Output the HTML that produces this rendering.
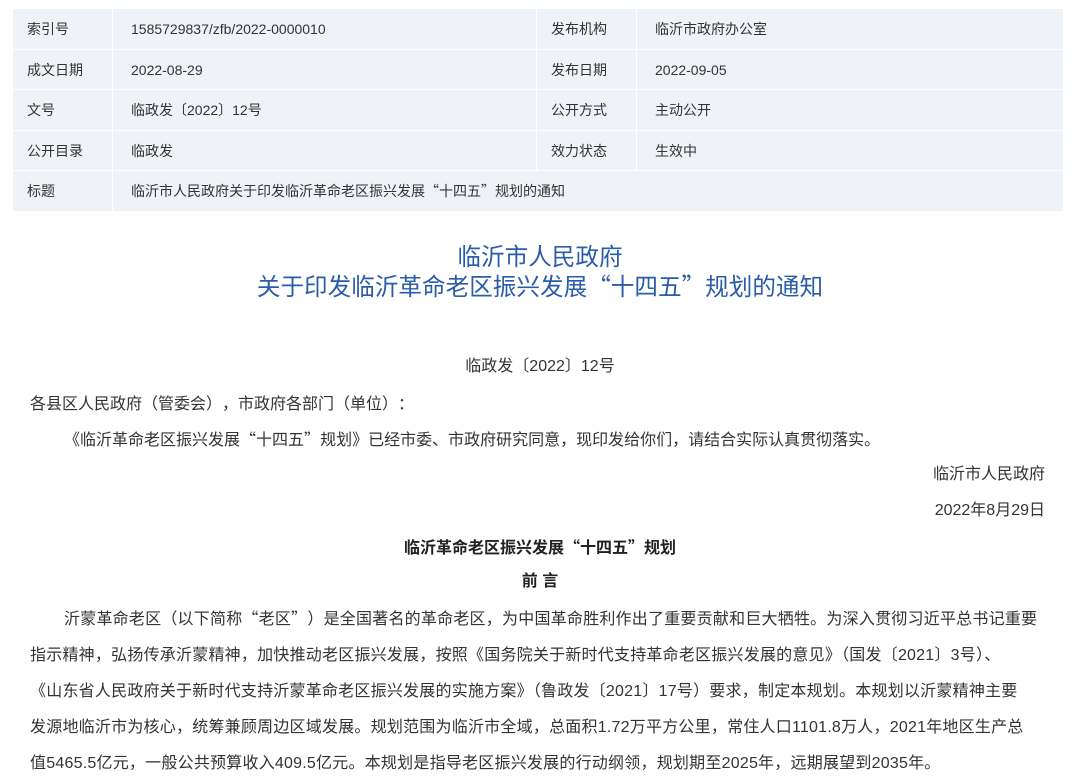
<!DOCTYPE html>
<html><head><meta charset="utf-8"><style>
*{margin:0;padding:0;box-sizing:border-box}
body{width:1080px;height:779px;background:#fff;font-family:"Liberation Sans","Noto Sans CJK SC",sans-serif;color:#333;overflow:hidden;position:relative}
.q{font-family:"Noto Sans CJK SC",sans-serif;line-height:1;display:inline-block;height:1em;vertical-align:baseline}
.tbl{position:absolute;left:13px;top:9px;width:1050px}
.row{display:flex;height:40.5px;margin-bottom:0;border-bottom:1px solid #fff;background:#eff2f6;font-size:14px;line-height:40px}
.c{border-right:1px solid #fff;padding-left:14px}
.c1{width:100px}.c2{width:424px;padding-left:18px}.c3{width:100px}.c4{flex:1;border-right:none;padding-left:18px}
.t{position:absolute;left:0;width:1080px;text-align:center;color:#2b5ca8;font-size:23.6px;line-height:30px;white-space:nowrap}
.l{position:absolute;font-size:16px;white-space:nowrap;line-height:20px;height:20px}
.p{letter-spacing:0.22px}
.b{font-weight:bold;color:#222}
</style></head><body>
<div class="tbl">
<div class="row"><div class="c c1">索引号</div><div class="c c2">1585729837/zfb/2022-0000010</div><div class="c c3">发布机构</div><div class="c c4">临沂市政府办公室</div></div>
<div class="row"><div class="c c1">成文日期</div><div class="c c2">2022-08-29</div><div class="c c3">发布日期</div><div class="c c4">2022-09-05</div></div>
<div class="row"><div class="c c1">文号</div><div class="c c2">临政发〔2022〕12号</div><div class="c c3">公开方式</div><div class="c c4">主动公开</div></div>
<div class="row"><div class="c c1">公开目录</div><div class="c c2">临政发</div><div class="c c3">效力状态</div><div class="c c4">生效中</div></div>
<div class="row"><div class="c c1">标题</div><div class="c" style="flex:1;border-right:none;padding-left:18px">临沂市人民政府关于印发临沂革命老区振兴发展<span class="q">“</span>十四五<span class="q">”</span>规划的通知</div></div>
</div>
<div class="t" style="top:243px">临沂市人民政府</div>
<div class="t" style="top:273px">关于印发临沂革命老区振兴发展<span class="q">“</span>十四五<span class="q">”</span>规划的通知</div>
<div class="l" style="left:0;width:1080px;text-align:center;top:357px">临政发〔2022〕12号</div>
<div class="l" style="left:30px;top:394px">各县区人民政府（管委会）<span class="q">，</span>市政府各部门（单位）<span class="q">：</span></div>
<div class="l" style="left:64px;top:430px">《临沂革命老区振兴发展<span class="q">“</span>十四五<span class="q">”</span>规划》已经市委、市政府研究同意<span class="q">，</span>现印发给你们<span class="q">，</span>请结合实际认真贯彻落实。</div>
<div class="l" style="right:35px;top:465px">临沂市人民政府</div>
<div class="l" style="right:35px;top:501px">2022年8月29日</div>
<div class="l b" style="left:0;width:1080px;text-align:center;top:538px">临沂革命老区振兴发展<span class="q">“</span>十四五<span class="q">”</span>规划</div>
<div class="l b" style="left:0;width:1080px;text-align:center;top:572px">前 言</div>
<div class="l p" style="left:64px;top:609px">沂蒙革命老区（以下简称<span class="q">“</span>老区<span class="q">”</span>）是全国著名的革命老区<span class="q">，</span>为中国革命胜利作出了重要贡献和巨大牺牲。为深入贯彻习近平总书记重要</div>
<div class="l p" style="left:30px;top:645px">指示精神<span class="q">，</span>弘扬传承沂蒙精神<span class="q">，</span>加快推动老区振兴发展<span class="q">，</span>按照《国务院关于新时代支持革命老区振兴发展的意见》（国发〔2021〕3号）、</div>
<div class="l p" style="left:30px;top:681px">《山东省人民政府关于新时代支持沂蒙革命老区振兴发展的实施方案》（鲁政发〔2021〕17号）要求<span class="q">，</span>制定本规划。本规划以沂蒙精神主要</div>
<div class="l p" style="left:30px;top:717px">发源地临沂市为核心<span class="q">，</span>统筹兼顾周边区域发展。规划范围为临沂市全域<span class="q">，</span>总面积1.72万平方公里<span class="q">，</span>常住人口1101.8万人<span class="q">，</span>2021年地区生产总</div>
<div class="l p" style="left:30px;top:753px">值5465.5亿元<span class="q">，</span>一般公共预算收入409.5亿元。本规划是指导老区振兴发展的行动纲领<span class="q">，</span>规划期至2025年<span class="q">，</span>远期展望到2035年。</div>
</body></html>
